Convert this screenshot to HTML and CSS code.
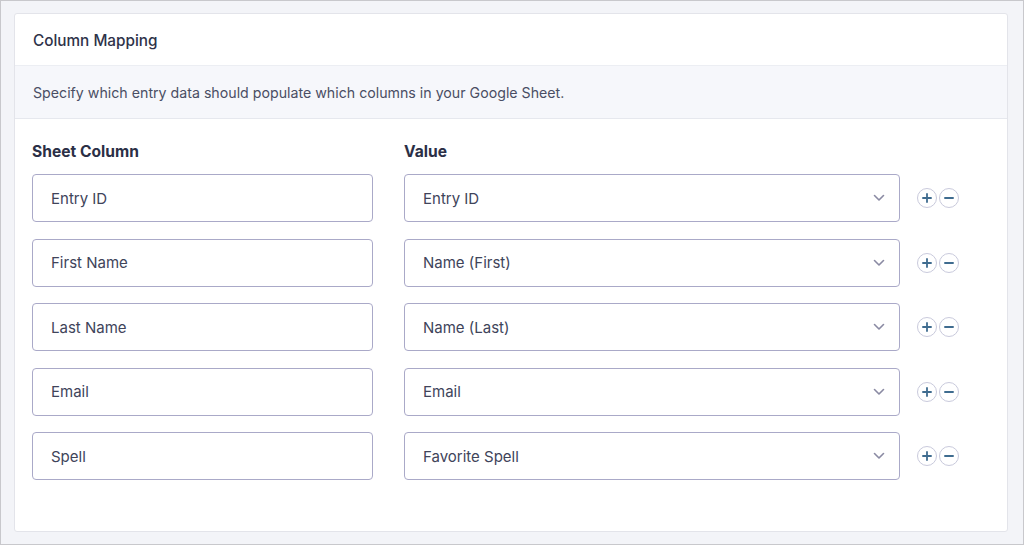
FILE: index.html
```html
<!DOCTYPE html>
<html>
<head>
<meta charset="utf-8">
<link rel="stylesheet" href="styles.css">
</head>
<body>
<div class="frame">
  <div class="card">
    <div class="card-header">Column Mapping</div>
    <div class="card-desc">Specify which entry data should populate which columns in your Google Sheet.</div>
    <div class="card-body">
      <div class="labels">
        <div class="label col-a">Sheet Column</div>
        <div class="label col-b">Value</div>
      </div>
      <div class="row">
        <div class="input col-a">Entry ID</div>
        <div class="select col-b"><span>Entry ID</span><svg class="chev" viewBox="0 0 12 8"><path d="M1.5 1.5 L6 6 L10.5 1.5"/></svg></div>
        <div class="actions"><span class="btn"><svg viewBox="0 0 20 20"><path d="M10 5.5v9M5.5 10h9"/></svg></span><span class="btn"><svg viewBox="0 0 20 20"><path d="M5.5 10h9"/></svg></span></div>
      </div>
      <div class="row">
        <div class="input col-a">First Name</div>
        <div class="select col-b"><span>Name (First)</span><svg class="chev" viewBox="0 0 12 8"><path d="M1.5 1.5 L6 6 L10.5 1.5"/></svg></div>
        <div class="actions"><span class="btn"><svg viewBox="0 0 20 20"><path d="M10 5.5v9M5.5 10h9"/></svg></span><span class="btn"><svg viewBox="0 0 20 20"><path d="M5.5 10h9"/></svg></span></div>
      </div>
      <div class="row">
        <div class="input col-a">Last Name</div>
        <div class="select col-b"><span>Name (Last)</span><svg class="chev" viewBox="0 0 12 8"><path d="M1.5 1.5 L6 6 L10.5 1.5"/></svg></div>
        <div class="actions"><span class="btn"><svg viewBox="0 0 20 20"><path d="M10 5.5v9M5.5 10h9"/></svg></span><span class="btn"><svg viewBox="0 0 20 20"><path d="M5.5 10h9"/></svg></span></div>
      </div>
      <div class="row">
        <div class="input col-a">Email</div>
        <div class="select col-b"><span>Email</span><svg class="chev" viewBox="0 0 12 8"><path d="M1.5 1.5 L6 6 L10.5 1.5"/></svg></div>
        <div class="actions"><span class="btn"><svg viewBox="0 0 20 20"><path d="M10 5.5v9M5.5 10h9"/></svg></span><span class="btn"><svg viewBox="0 0 20 20"><path d="M5.5 10h9"/></svg></span></div>
      </div>
      <div class="row">
        <div class="input col-a">Spell</div>
        <div class="select col-b"><span>Favorite Spell</span><svg class="chev" viewBox="0 0 12 8"><path d="M1.5 1.5 L6 6 L10.5 1.5"/></svg></div>
        <div class="actions"><span class="btn"><svg viewBox="0 0 20 20"><path d="M10 5.5v9M5.5 10h9"/></svg></span><span class="btn"><svg viewBox="0 0 20 20"><path d="M5.5 10h9"/></svg></span></div>
      </div>
    </div>
  </div>
</div>
</body>
</html>
```

FILE: styles.css
```css
* { box-sizing: border-box; }
html, body {
  margin: 0;
  padding: 0;
  width: 1024px;
  height: 545px;
  overflow: hidden;
}
body {
  font-family: Inter, "Noto Sans", "Liberation Sans", sans-serif;
  background: #f3f4f8;
}
.frame {
  width: 1024px;
  height: 545px;
  border: 1px solid #c8c8cc;
  padding: 12px 15px 0 13px;
  background: #f3f4f8;
}
.card {
  background: #ffffff;
  border: 1px solid #e3e4ea;
  border-radius: 3px;
  height: 519px;
  display: flex;
  flex-direction: column;
}
.card-header {
  height: 52px;
  display: flex;
  align-items: center;
  padding-left: 18px;
  padding-top: 1px;
  font-size: 15.3px;
  font-weight: 500;
  color: #2e3249;
  border-bottom: 1px solid #eceef3;
}
.card-desc {
  height: 53px;
  display: flex;
  align-items: center;
  padding-left: 18px;
  font-size: 14.2px;
  color: #4a4e64;
  background: #f6f7fb;
  border-bottom: 1px solid #e6e8ee;
}
.card-body {
  padding: 26px 0 0 17px;
  display: flex;
  flex-direction: column;
  gap: 16.5px;
}
.labels {
  display: flex;
  gap: 31px;
  height: 14px;
  margin-bottom: -1.5px;
}
.label {
  font-size: 15.6px;
  font-weight: 700;
  color: #2b2f46;
  line-height: 14px;
}
.col-a { width: 341px; }
.col-b { width: 496px; }
.row {
  display: flex;
  align-items: center;
  gap: 31px;
  height: 48px;
}
.input, .select {
  height: 48px;
  border: 1px solid #aaa9c8;
  border-radius: 4px;
  display: flex;
  align-items: center;
  padding-left: 18px;
  font-size: 15px;
  color: #40445a;
  background: #fff;
}
.select {
  justify-content: space-between;
  padding-right: 14px;
}
.chev {
  width: 12px;
  height: 8px;
  fill: none;
  stroke: #8a8aa3;
  stroke-width: 1.6;
  stroke-linecap: round;
  stroke-linejoin: round;
}
.actions {
  display: flex;
  gap: 2px;
  margin-left: -14px;
}
.btn {
  width: 20px;
  height: 20px;
  border: 1px solid #c9cadc;
  border-radius: 50%;
  display: flex;
  align-items: center;
  justify-content: center;
  background: #fff;
}
.btn svg {
  width: 18px;
  height: 18px;
  fill: none;
  stroke: #3f6c8f;
  stroke-width: 2;
  stroke-linecap: round;
}
```
